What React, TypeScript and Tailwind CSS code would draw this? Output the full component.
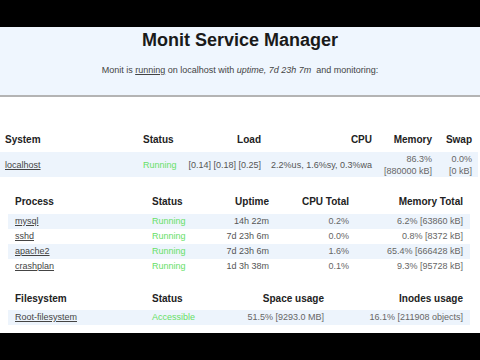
const processes = [
  { name: "mysql", uptime: "14h 22m", cpu: "0.2%", mem: "6.2% [63860 kB]" },
  { name: "sshd", uptime: "7d 23h 6m", cpu: "0.0%", mem: "0.8% [8372 kB]" },
  { name: "apache2", uptime: "7d 23h 6m", cpu: "1.6%", mem: "65.4% [666428 kB]" },
  { name: "crashplan", uptime: "1d 3h 38m", cpu: "0.1%", mem: "9.3% [95728 kB]" },
];

const sysCols = "grid grid-cols-[138px_45px_73px_111px_60px_40px] pl-[5px]";
const procCols = "grid grid-cols-[137px_48px_69px_80px_114px] pl-[7px]";
const fsCols = "grid grid-cols-[137px_48px_124px_139px] pl-[7px]";

export default function App() {
  return (
    <div
      className="flex flex-col h-[360px] w-[480px] bg-white text-[#333] overflow-hidden"
      style={{ fontFamily: '"Liberation Sans", Arial, sans-serif' }}
    >
      <div className="h-[27px] bg-black shrink-0" />

      {/* header */}
      <div className="h-[70px] shrink-0 bg-[#eff6fe] border-b-2 border-[#b4b4b4] flex flex-col items-center pt-[4px]">
        <h1 className="text-[18px] leading-[18px] font-bold text-[#1a1a1a]">
          Monit Service Manager
        </h1>
        <p className="mt-[15px] text-[9px] leading-[12px] text-[#444]">
          Monit is <span className="underline">running</span> on localhost with{" "}
          <i>uptime, 7d 23h 7m</i>&nbsp; and monitoring:
        </p>
      </div>

      {/* system */}
      <div className={`${sysCols} mt-[32px] h-[20px] items-center text-[10px] font-bold text-[#222]`}>
        <div>System</div>
        <div>Status</div>
        <div className="text-right">Load</div>
        <div className="text-right">CPU</div>
        <div className="text-right">Memory</div>
        <div className="text-right">Swap</div>
      </div>
      <div className={`${sysCols} mt-[3px] mr-[2px] h-[25px] items-center bg-[#edf4fc] text-[9px] leading-[12px]`}>
        <div className="underline text-[#444]">localhost</div>
        <div className="text-[#66e066]">Running</div>
        <div className="text-right text-[#555]">[0.14] [0.18] [0.25]</div>
        <div className="text-right text-[#555]">2.2%us, 1.6%sy, 0.3%wa</div>
        <div className="text-right text-[#666]">
          86.3%
          <br />
          [880000 kB]
        </div>
        <div className="text-right text-[#666]">
          0.0%
          <br />
          [0 kB]
        </div>
      </div>

      {/* processes */}
      <div className="mx-[8px] w-[462px] mt-[14px]">
        <div className={`${procCols} h-[20px] items-center text-[10px] font-bold text-[#222]`}>
          <div>Process</div>
          <div>Status</div>
          <div className="text-right">Uptime</div>
          <div className="text-right">CPU Total</div>
          <div className="text-right">Memory Total</div>
        </div>
        <div className="mt-[3px]">
          {processes.map((p, i) => (
            <div
              key={p.name}
              className={`${procCols} h-[15px] items-center text-[9px] ${i % 2 === 0 ? "bg-[#edf4fc]" : "bg-white"}`}
            >
              <div className="underline text-[#444]">{p.name}</div>
              <div className="text-[#66e066]">Running</div>
              <div className="text-right text-[#555]">{p.uptime}</div>
              <div className="text-right text-[#666]">{p.cpu}</div>
              <div className="text-right text-[#666]">{p.mem}</div>
            </div>
          ))}
        </div>
      </div>

      {/* filesystem */}
      <div className="mx-[8px] w-[462px] mt-[14px]">
        <div className={`${fsCols} h-[20px] items-center text-[10px] font-bold text-[#222]`}>
          <div>Filesystem</div>
          <div>Status</div>
          <div className="text-right">Space usage</div>
          <div className="text-right">Inodes usage</div>
        </div>
        <div className={`${fsCols} mt-[2px] h-[15px] items-center text-[9px] bg-[#edf4fc]`}>
          <div className="underline text-[#444]">Root-filesystem</div>
          <div className="text-[#66e066]">Accessible</div>
          <div className="text-right text-[#666]">51.5% [9293.0 MB]</div>
          <div className="text-right text-[#666]">16.1% [211908 objects]</div>
        </div>
      </div>

      <div className="mt-[8px] flex-1 bg-black" />
    </div>
  );
}
